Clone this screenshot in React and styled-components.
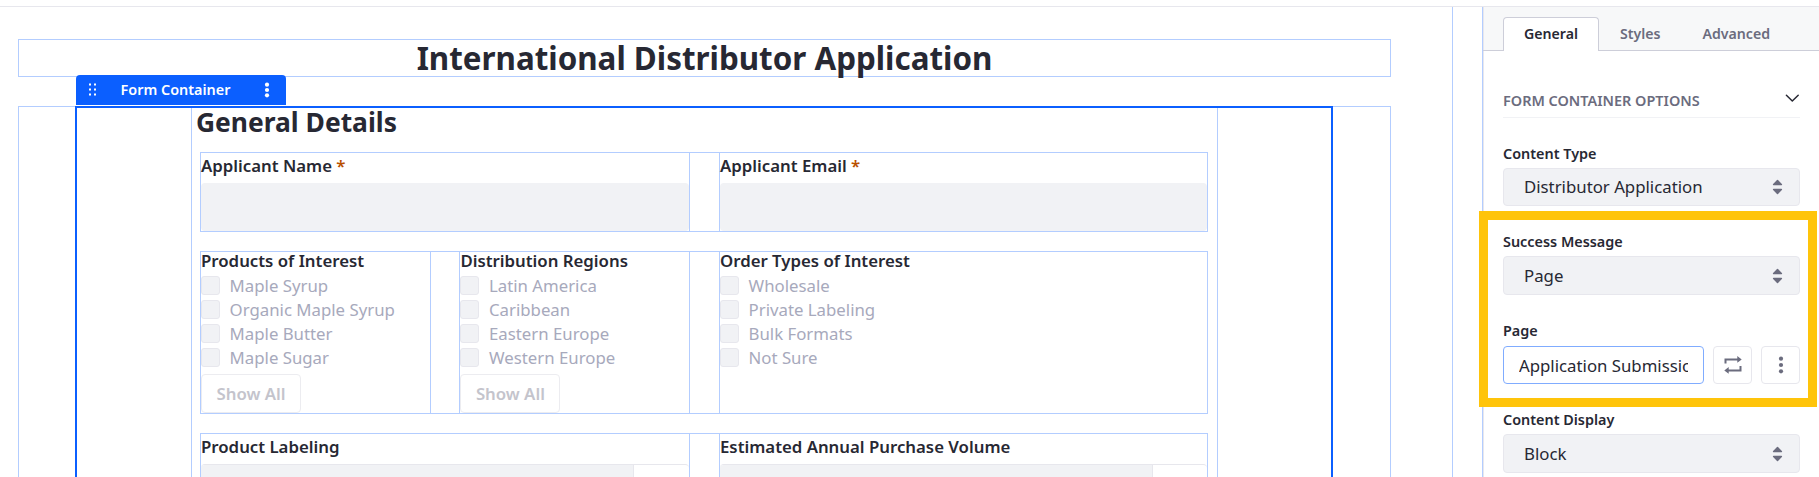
import React from "react";
import styled, { createGlobalStyle } from "styled-components";

const Global = createGlobalStyle`
  *, *::before, *::after { box-sizing: border-box; }
  body { margin: 0; background: #fff; color: #272833; font: 16.8px/24px "Noto Sans", sans-serif; }
  h1, h2 { margin: 0; font-weight: 700; }
  button, input { font: inherit; color: inherit; }
`;

const outline = "1px solid #b3cdff";

const Page = styled.div`
  height: 477px;
  overflow: hidden;
  display: flex;
  flex-direction: column;
`;
const TopBar = styled.div`
  flex: none;
  height: 7px;
  border-bottom: 1px solid #e7e7ed;
`;
const Main = styled.div`
  flex: 1;
  min-height: 0;
  display: flex;
  gap: 29px;
`;
const Canvas = styled.main`
  flex: none;
  width: 1453px;
  padding: 32px 61px 0 18px;
  border-right: ${outline};
  overflow: hidden;
`;
const TitleBox = styled.div`
  height: 38px;
  border: ${outline};
  text-align: center;
`;
const Title = styled.h1`
  font-size: 31.35px;
  line-height: 36px;
`;
const Section = styled.section`
  margin-top: 29px;
  height: 600px;
  border: ${outline};
  padding-left: 56px;
`;
const FormContainer = styled.div`
  position: relative;
  width: 1258px;
  height: 600px;
  margin-top: -1px;
  border: 2px solid #0b5fff;
  padding-left: 114px;
`;
const ContainerTag = styled.div`
  position: absolute;
  left: -1px;
  top: -33px;
  width: 210px;
  height: 30px;
  padding: 0 16px 0 12px;
  display: flex;
  align-items: center;
  border-radius: 4px 4px 0 0;
  background: #0b5fff;
  color: #fff;
  font-size: 14.4px;
  font-weight: 600;
`;
const TagName = styled.span`
  flex: 1;
  margin-left: 24.6px;
`;
const FormColumn = styled.div`
  width: 1027px;
  height: 600px;
  padding: 0 9px 0 8px;
  border: ${outline};
  border-width: 0 1px;
`;
const Heading = styled.h2`
  height: 44px;
  margin-left: -4px;
  font-size: 26.4px;
  line-height: 28px;
`;
const Row = styled.div`
  display: flex;
  height: ${(p) => p.$height}px;
  margin-bottom: ${(p) => p.$after || 0}px;
  border: ${outline};
  border-width: 1px 0;
`;
const Cell = styled.div`
  flex: none;
  width: ${(p) => (p.$narrow ? 231 : p.$gap ? 490 : 489)}px;
  margin-right: ${(p) => p.$gap || 0}px;
  border: ${outline};
  border-width: 0 1px;
`;
const FieldLabel = styled.label`
  display: block;
  padding-top: 1px;
  margin-bottom: 5px;
  font-weight: 600;
`;
const GroupLabel = styled.div`
  margin-bottom: 4px;
  line-height: 18px;
  font-weight: 600;
`;
const Required = styled.span`
  color: #b95000;
`;
const Field = styled.div`
  height: 48px;
  border-radius: 4px;
  background: #f1f2f5;
`;
const SplitField = styled.div`
  display: flex;
  height: 48px;
  border: 1px solid #e7e7ed;
  border-width: 1px 0 0;
  border-radius: 4px;
  overflow: hidden;
`;
const SplitValue = styled.div`
  width: 433px;
  background: #f1f2f5;
  border-right: 1px solid #e7e7ed;
`;
const Option = styled.div`
  display: flex;
  gap: 9.6px;
  height: 24px;
  color: #a7a9bc;
`;
const Check = styled.span`
  width: 19px;
  height: 19px;
  margin-top: 2px;
  border: 1px solid #e7e7ed;
  border-radius: 3px;
  background: #f1f2f5;
`;
const ShowAll = styled.button`
  display: block;
  width: 100px;
  height: 39px;
  margin-top: 4px;
  padding: 0;
  border: 1px solid #ececf0;
  border-radius: 4px;
  background: #fff;
  color: #c4c4cc;
  font-weight: 600;
`;
const Sidebar = styled.aside`
  position: relative;
  flex: 1;
  display: flex;
  flex-direction: column;
  border-left: ${outline};
`;
const Tabs = styled.div`
  flex: none;
  display: flex;
  height: 44px;
  padding: 10px 0 0 20px;
  background: #f7f8f9;
  border-bottom: 1px solid #cdced9;
  box-shadow: inset 1px 0 #e7e7ed;
`;
const Tab = styled.div`
  height: 34px;
  padding: 5px 20px 0;
  border: 1px solid ${(p) => (p.$active ? "#cdced9" : "transparent")};
  border-bottom: 0;
  border-radius: 4px 4px 0 0;
  background: ${(p) => (p.$active ? "#fff" : "transparent")};
  color: ${(p) => (p.$active ? "#272833" : "#6b6c7e")};
  font-size: 14.15px;
  line-height: 22px;
  font-weight: 600;
`;
const Panel = styled.div`
  flex: 1;
  width: 317px;
  padding: 39px 0 0 20px;
  box-shadow: inset 1px 0 #e7e7ed;
`;
const PanelHeader = styled.div`
  display: flex;
  justify-content: space-between;
  height: 28px;
  margin-bottom: 26px;
  border-bottom: 1px solid #f1f2f5;
  color: #6b6c7e;
  font-size: 14.45px;
  line-height: 22px;
  font-weight: 600;
`;
const Setting = styled.div`
  height: ${(p) => p.$height}px;
`;
const SettingLabel = styled.div`
  height: ${(p) => p.$height || 24}px;
  font-size: 14.4px;
  line-height: 20px;
  font-weight: 600;
`;
const SelectBox = styled.div`
  display: flex;
  align-items: center;
  justify-content: space-between;
  height: ${(p) => p.$height || 39}px;
  padding: 0 16px 0 20px;
  border: 1px solid #e7e7ed;
  border-radius: 4px;
  background: #f1f2f5;
`;
const PageRow = styled.div`
  display: flex;
  gap: 9px;
`;
const PageInput = styled.input`
  width: 201px;
  height: 38px;
  padding: 0 15px;
  border: 1px solid #80acff;
  border-radius: 4px;
  outline: 0;
  background: #fff;
`;
const IconButton = styled.button`
  width: 39px;
  height: 38px;
  padding: 0;
  display: grid;
  place-items: center;
  border: 1px solid #e7e7ed;
  border-radius: 4px;
  background: #fff;
  color: #6b6c7e;
`;
const Highlight = styled.div`
  position: absolute;
  left: -4px;
  top: 204px;
  width: 338px;
  height: 196px;
  border: 9px solid #ffc40a;
  pointer-events: none;
`;

const DragIcon = () => (
  <svg width="8" height="14" viewBox="0 0 8 14" fill="currentColor">
    {[1, 6].map((x) => [1, 6, 11].map((y) => <rect key={`${x}-${y}`} x={x} y={y - 0.5} width="2" height="2" />))}
  </svg>
);
const DotsIcon = ({ step = 6.3 }) => (
  <svg width="6" height="18" viewBox="0 0 6 18" fill="currentColor">
    {[-1, 0, 1].map((n) => (
      <circle key={n} cx="3" cy={9 + n * step} r="2.1" />
    ))}
  </svg>
);
const SwapIcon = () => (
  <svg width="18" height="18" viewBox="0 0 18 18" fill="none" stroke="currentColor" strokeWidth="2">
    <path d="M1.500 7.500V3.400H14M16.500 10V14.400H4" />
    <path d="M13.300 0L17.700 3.400L13.300 6.800ZM4.700 11L.3 14.400L4.700 17.800Z" fill="currentColor" stroke="none" />
  </svg>
);
const CaretsIcon = () => (
  <svg width="11" height="16" viewBox="0 0 11 16" fill="#6b6c7e">
    <path d="M5 1.100Q5.500 .6 6 1.100L9.900 5Q10.600 6.300 9.500 6.300H1.500Q.4 6.300 1.100 5ZM5 14.900Q5.500 15.400 6 14.900L9.900 11Q10.600 9.700 9.500 9.700H1.500Q.4 9.700 1.100 11Z" />
  </svg>
);
const ChevronIcon = () => (
  <svg width="16" height="16" viewBox="0 0 16 16" fill="none" stroke="#272833" strokeWidth="1.5" strokeLinecap="round" strokeLinejoin="round">
    <path d="M2.400 5.300L8.300 11L14.200 5.300" />
  </svg>
);

const Select = ({ label, value, height, boxHeight }) => (
  <Setting $height={height}>
    <SettingLabel>{label}</SettingLabel>
    <SelectBox $height={boxHeight}>
      {value}
      <CaretsIcon />
    </SelectBox>
  </Setting>
);

const TextField = ({ label, gap }) => (
  <Cell $gap={gap}>
    <FieldLabel>
      {label} <Required>*</Required>
    </FieldLabel>
    <Field />
  </Cell>
);

const DropdownField = ({ label, gap }) => (
  <Cell $gap={gap}>
    <FieldLabel>{label}</FieldLabel>
    <SplitField>
      <SplitValue />
    </SplitField>
  </Cell>
);

const CheckGroup = ({ label, options, narrow, gap }) => (
  <Cell $narrow={narrow} $gap={gap}>
    <GroupLabel>{label}</GroupLabel>
    {options.map((o) => (
      <Option key={o}>
        <Check />
        {o}
      </Option>
    ))}
    {narrow && <ShowAll>Show All</ShowAll>}
  </Cell>
);

export default function App() {
  return (
    <Page>
      <Global />
      <TopBar />
      <Main>
        <Canvas>
          <TitleBox>
            <Title>International Distributor Application</Title>
          </TitleBox>
          <Section>
            <FormContainer>
              <ContainerTag>
                <DragIcon />
                <TagName>Form Container</TagName>
                <DotsIcon step={5.3} />
              </ContainerTag>
              <FormColumn>
                <Heading>General Details</Heading>
                <Row $height={80} $after={19}>
                  <TextField label="Applicant Name" gap={29} />
                  <TextField label="Applicant Email" />
                </Row>
                <Row $height={163} $after={19}>
                  <CheckGroup
                    label="Products of Interest"
                    options={["Maple Syrup", "Organic Maple Syrup", "Maple Butter", "Maple Sugar"]}
                    narrow
                    gap={28.4}
                  />
                  <CheckGroup
                    label="Distribution Regions"
                    options={["Latin America", "Caribbean", "Eastern Europe", "Western Europe"]}
                    narrow
                    gap={28.6}
                  />
                  <CheckGroup
                    label="Order Types of Interest"
                    options={["Wholesale", "Private Labeling", "Bulk Formats", "Not Sure"]}
                  />
                </Row>
                <Row $height={80}>
                  <DropdownField label="Product Labeling" gap={29} />
                  <DropdownField label="Estimated Annual Purchase Volume" />
                </Row>
              </FormColumn>
            </FormContainer>
          </Section>
        </Canvas>
        <Sidebar>
          <Tabs>
            <Tab $active>General</Tab>
            <Tab>Styles</Tab>
            <Tab>Advanced</Tab>
          </Tabs>
          <Panel>
            <PanelHeader>
              FORM CONTAINER OPTIONS
              <ChevronIcon />
            </PanelHeader>
            <Select label="Content Type" value="Distributor Application" height={88} boxHeight={38} />
            <Select label="Success Message" value="Page" height={89} />
            <Setting $height={89}>
              <SettingLabel $height={25}>Page</SettingLabel>
              <PageRow>
                <PageInput readOnly value="Application Submission" />
                <IconButton aria-label="Change page">
                  <SwapIcon />
                </IconButton>
                <IconButton aria-label="More">
                  <DotsIcon />
                </IconButton>
              </PageRow>
            </Setting>
            <Select label="Content Display" value="Block" height={70} />
          </Panel>
          <Highlight />
        </Sidebar>
      </Main>
    </Page>
  );
}
